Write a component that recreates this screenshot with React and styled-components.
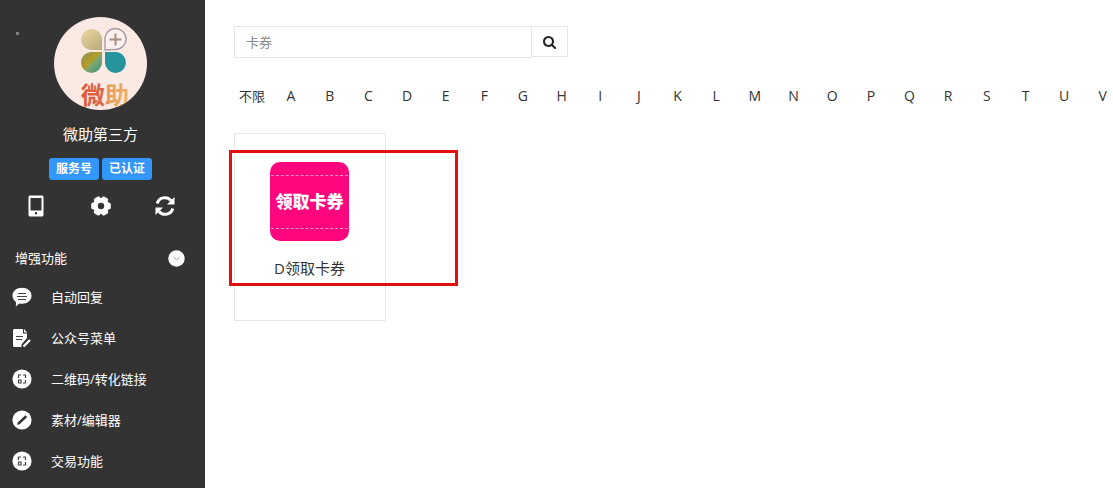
import { useState } from "react";
import styled, { createGlobalStyle } from "styled-components";

const GlobalStyle = createGlobalStyle`
  * {
    box-sizing: border-box;
  }
  body {
    margin: 0;
    background-color: #fff;
    color: #333;
    font-family: "Open Sans", "Noto Sans CJK SC", sans-serif;
    font-size: 13px;
    line-height: 20px;
  }
  button {
    font: inherit;
    color: inherit;
    padding: 0;
    border: none;
    background: none;
    cursor: pointer;
  }
  a {
    color: inherit;
    text-decoration: none;
  }
  ul {
    margin: 0;
    padding: 0;
    list-style: none;
  }
  svg {
    display: block;
  }
`

const Page = styled.div`
  display: flex;
  min-height: 100vh;
`

const Sidebar = styled.aside`
  flex: none;
  width: 205px;
  background-color: #333;
  color: #fff;
`

const Profile = styled.div`
  display: flex;
  flex-direction: column;
  align-items: center;
  padding: 17px 4px 0 0;
`

const AvatarRow = styled.div`
  display: grid;
  grid-template-columns: 1fr 93px 1fr;
  width: 100%;
`

const Dot = styled.span`
  width: 3px;
  height: 3px;
  margin: 15px 0 0 16px;
  border: 1px solid #ccc;
  border-radius: 50%;
`

const Name = styled.div`
  margin-top: 14px;
  font-size: 15px;
`

const Tags = styled.div`
  display: flex;
  gap: 3px;
  margin-top: 14px;
`

const Tag = styled.span`
  width: 50px;
  border-radius: 3px;
  background-color: #3296fa;
  font-size: 12px;
  font-weight: bold;
  line-height: 22px;
  text-align: center;
`

const Tools = styled.div`
  display: flex;
  justify-content: space-between;
  width: 100%;
  padding: 15px 25px 0;
`

const MenuTitle = styled.button`
  display: flex;
  justify-content: space-between;
  align-items: center;
  width: 100%;
  margin-top: 31px;
  padding: 0 20px 0 15px;
`

const MenuLink = styled.a`
  display: flex;
  align-items: center;
  gap: 19px;
  height: 41px;
  padding-left: 12px;
`

const Menu = styled.ul`
  margin-top: 8px;
`

const Main = styled.main`
  flex: 1;
  min-width: 0;
  padding: 26px 0 0 29px;
`

const SearchForm = styled.form`
  display: flex;
  align-items: flex-start;
  width: 334px;
  input {
    flex: 1;
    min-width: 0;
    height: 32px;
    padding: 0 11px;
    border: 1px solid #e5e6e7;
    border-right: none;
    outline: none;
    font: inherit;
  }
  input::placeholder {
    color: #888;
    opacity: 1;
  }
  button {
    display: flex;
    justify-content: center;
    align-items: center;
    width: 37px;
    height: 31px;
    border: 1px solid #e5e6e7;
  }
`

const Filter = styled.nav`
  display: flex;
  gap: 16px;
  margin-top: 28px;
  padding-left: 5px;
`

const Letters = styled.ul`
  flex: 1;
  display: flex;
  justify-content: space-between;
  font-size: 14px;
`

const FilterButton = styled.button`
  min-width: 20px;
  text-align: center;
  white-space: nowrap;
`

const Cards = styled.div`
  position: relative;
  display: flex;
  margin-top: 27px;
`

const Card = styled.a`
  display: flex;
  flex-direction: column;
  align-items: center;
  width: 152px;
  height: 188px;
  padding: 28px 1px 0 0;
  border: 1px solid #e7e7e7;
  font-size: 15px;
`

const Ticket = styled.span`
  display: flex;
  flex-direction: column;
  justify-content: center;
  width: 79px;
  height: 79px;
  margin-bottom: 17px;
  border-radius: 10px;
  background-color: #ff057e;
  color: #fff;
  font-size: 17px;
  font-weight: bold;
  line-height: 52px;
  text-align: center;
  b {
    margin: 0 1px;
    border: dashed #ff8fc5;
    border-width: 1px 0;
  }
`

const Highlight = styled.div`
  position: absolute;
  top: 17px;
  left: -5px;
  width: 229px;
  height: 136px;
  border: 3px solid #e01010;
  pointer-events: none;
`

function Avatar() {
  return (
    <svg width="93" height="93" viewBox="0 0 93 93" role="img" aria-label="微助">
      <defs>
        <clipPath id="round"><circle cx="46.5" cy="46.5" r="46.5" /></clipPath>
        <linearGradient id="sand" x1="0" y1="0" x2="1" y2="1">
          <stop offset="0" stopColor="#ead9a0" />
          <stop offset="1" stopColor="#b9aa7c" />
        </linearGradient>
        <linearGradient id="olive" x1="0" y1="0" x2="1" y2="1">
          <stop offset="0" stopColor="#91915a" />
          <stop offset="0.48" stopColor="#b59c24" />
          <stop offset="0.52" stopColor="#86a96a" />
          <stop offset="1" stopColor="#388f88" />
        </linearGradient>
        <linearGradient id="word">
          <stop offset="0" stopColor="#df5636" />
          <stop offset="0.45" stopColor="#d8694c" />
          <stop offset="0.6" stopColor="#e6a15b" />
          <stop offset="1" stopColor="#eeae6a" />
        </linearGradient>
      </defs>
      <g clipPath="url(#round)">
        <rect width="93" height="93" fill="#fbe9e4" />
        <path d="M48 33H37a10.500 10.500 0 1 1 11-10.500z" fill="url(#sand)" />
        <path d="M51 33V22.500A10.500 10.500 0 1 1 61.500 32.500z" fill="#fbf1ee" stroke="#a99aa6" strokeWidth="1.400" />
        <path d="M61.500 16.500v12M55.500 22.500h12" stroke="#a58f80" strokeWidth="2" />
        <path d="M48 35H37a10.500 10.500 0 1 0 11 10.500z" fill="url(#olive)" />
        <path d="M51 35h11.500a10.500 10.500 0 1 1-11.500 10.500z" fill="#25949d" />
        <text x="27" y="87" fontSize="24" fontWeight="bold" fill="url(#word)">微助</text>
      </g>
    </svg>
  )
}

function PhoneIcon() {
  return (
    <svg width="22" height="22" viewBox="0 0 22 22">
      <path fillRule="evenodd" fill="#fff" d="M5 0.500h12a1.500 1.500 0 0 1 1.500 1.500v18a1.500 1.500 0 0 1-1.500 1.500H5A1.500 1.500 0 0 1 3.500 20V2A1.500 1.500 0 0 1 5 0.500zM5.500 3v12.500h11V3zM11 17a1.200 1.200 0 1 0 0 2.400 1.200 1.200 0 0 0 0-2.400z" />
    </svg>
  )
}

function GearIcon() {
  return (
    <svg width="22" height="22" viewBox="0 0 22 22">
      <g fill="#fff">
        <circle cx="11" cy="11" r="8" />
        {[30, 90, 150, 210, 270, 330].map((deg) => (
          <rect key={deg} x="7.500" y="1.200" width="7" height="6" rx="2" transform={`rotate(${deg} 11 11)`} />
        ))}
      </g>
      <circle cx="11" cy="11" r="3.200" fill="#333" />
    </svg>
  )
}

function RefreshIcon() {
  return (
    <svg width="22" height="22" viewBox="0 0 22 22">
      <g fill="none" stroke="#fff" strokeWidth="3">
        <path d="M3.200 8.500A8 8 0 0 1 17 5.500" />
        <path d="M18.800 13.500A8 8 0 0 1 5 16.500" />
      </g>
      <path d="M20.500 2v7.500H13zM1.500 20v-7.500H9z" fill="#fff" />
    </svg>
  )
}

function ArrowIcon() {
  return (
    <svg width="17" height="17" viewBox="0 0 17 17">
      <circle cx="8.500" cy="8.500" r="8.200" fill="#fff" />
      <path d="M5.500 7.200l3 2.600 3-2.600" fill="none" stroke="#999" />
    </svg>
  )
}

function SearchIcon() {
  return (
    <svg width="14" height="14" viewBox="0 0 1792 1792" fill="#222">
      <path d="M1152 832q0-185-131.500-316.500t-316.500-131.500-316.500 131.500-131.500 316.500 131.500 316.500 316.500 131.500 316.500-131.500 131.500-316.500zm512 832q0 52-38 90t-90 38q-54 0-90-38l-343-342q-179 124-399 124-143 0-273.500-55.500t-225-150-150-225-55.500-273.500 55.500-273.500 150-225 225-150 273.500-55.500 273.500 55.500 225 150 150 225 55.500 273.500q0 220-124 399l343 343q37 37 37 90z" />
    </svg>
  )
}

const shapes = {
  chat: (
    <>
      <path d="M10 0.800c5.400 0 9.500 3.500 9.500 8s-4.100 8-9.500 8c-.9 0-1.800-.1-2.600-.3L3.800 19.600 4 15C1.900 13.600 0.500 11.300 0.500 8.800c0-4.500 4.100-8 9.500-8z" fill="#fff" />
      <path d="M6 6.500h8M5 9.500h10M6 12.500h8" stroke="#444" strokeWidth="1.200" />
    </>
  ),
  file: (
    <>
      <path d="M2.500 1H11v4.500h4V10l-5.500 6.500V19h-7A1.500 1.500 0 0 1 1 17.500v-15A1.500 1.500 0 0 1 2.500 1z" fill="#fff" />
      <path d="M12 1l3.200 3.500H12z" fill="#fff" />
      <path d="M4 8.500h7M4 11.500h6" stroke="#444" strokeWidth="1.200" />
      <path d="M11.500 18.500l6.500-6.500" stroke="#fff" strokeWidth="2.400" />
    </>
  ),
  code: (
    <>
      <circle cx="10" cy="10" r="9.600" fill="#fff" />
      <path d="M9 6H6.500v3M11 6h2.500v3M6.500 11v3H9v-3zM13.500 11v3H11" fill="none" stroke="#444" strokeWidth="1.200" />
    </>
  ),
  edit: (
    <>
      <circle cx="10" cy="10" r="9.600" fill="#fff" />
      <path d="M5 15l1-2.800 7.300-7 1.900 1.800-7.300 7z" fill="#333" />
    </>
  ),
}

const menus = [
  { icon: "chat", text: "自动回复" },
  { icon: "file", text: "公众号菜单" },
  { icon: "code", text: "二维码/转化链接" },
  { icon: "edit", text: "素材/编辑器" },
  { icon: "code", text: "交易功能" },
]

function App() {
  const [open, setOpen] = useState(true);
  const [keyword, setKeyword] = useState("");

  return (
    <Page>
      <GlobalStyle />
      <Sidebar>
        <Profile>
          <AvatarRow>
            <Dot />
            <Avatar />
          </AvatarRow>
          <Name>微助第三方</Name>
          <Tags>
            <Tag>服务号</Tag>
            <Tag>已认证</Tag>
          </Tags>
          <Tools>
            <button aria-label="手机"><PhoneIcon /></button>
            <button aria-label="设置"><GearIcon /></button>
            <button aria-label="刷新"><RefreshIcon /></button>
          </Tools>
        </Profile>
        <MenuTitle onClick={() => setOpen(!open)}>
          增强功能
          <ArrowIcon />
        </MenuTitle>
        {open && (
          <Menu>
            {menus.map((menu) => (
              <li key={menu.text}>
                <MenuLink href="#">
                  <svg width="20" height="20" viewBox="0 0 20 20">{shapes[menu.icon]}</svg>
                  {menu.text}
                </MenuLink>
              </li>
            ))}
          </Menu>
        )}
      </Sidebar>
      <Main>
        <SearchForm onSubmit={(e) => e.preventDefault()}>
          <input
            type="text"
            aria-label="搜索"
            placeholder="卡券"
            value={keyword}
            onChange={(e) => setKeyword(e.target.value)}
          />
          <button aria-label="搜索"><SearchIcon /></button>
        </SearchForm>
        <Filter>
          <FilterButton>不限</FilterButton>
          <Letters>
            {"ABCDEFGHIJKLMNOPQRSTUV".split("").map((letter) => (
              <li key={letter}><FilterButton>{letter}</FilterButton></li>
            ))}
          </Letters>
        </Filter>
        <Cards>
          <Card href="#">
            <Ticket><b>领取卡券</b></Ticket>
            D领取卡券
          </Card>
          <Highlight />
        </Cards>
      </Main>
    </Page>
  )
}

export default App;
